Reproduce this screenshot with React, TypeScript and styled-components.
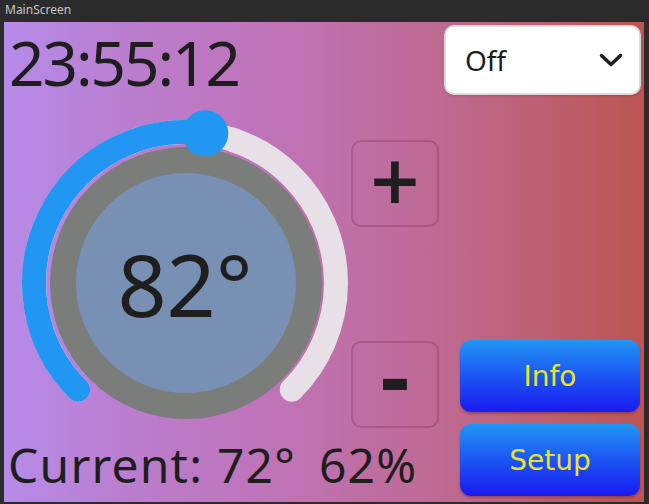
import styled, { createGlobalStyle } from 'styled-components';

const GlobalStyle = createGlobalStyle`
  html, body {
    margin: 0;
    padding: 0;
    background: #2b2b2b;
  }
`;

// gauge geometry, in screen coordinates
const CX = 181;
const CY = 261;
const R = 151;
const START = -135;
const END = 135;

const point = (deg: number) => {
  const a = (deg * Math.PI) / 180;
  return { x: CX + R * Math.sin(a), y: CY - R * Math.cos(a) };
};

const arc = (from: number, to: number) => {
  const a = point(from);
  const b = point(to);
  const large = to - from > 180 ? 1 : 0;
  return `M ${a.x} ${a.y} A ${R} ${R} 0 ${large} 1 ${b.x} ${b.y}`;
};

const Gauge = ({ value, min, max }: { value: number; min: number; max: number }) => {
  const angle = START + ((value - min) / (max - min)) * (END - START);
  const knob = point(angle);
  return (
    <DialSvg width={347} height={326} viewBox="0 84 347 326">
      <path d={arc(START, END)} fill="none" stroke="#e7e1e7" strokeWidth={24} strokeLinecap="round" />
      <path d={arc(START, angle)} fill="none" stroke="#2196f3" strokeWidth={24} strokeLinecap="round" />
      <circle cx={182} cy={261} r={123} fill="#7890b4" stroke="#7a7d7a" strokeWidth={26} />
      <circle cx={knob.x} cy={knob.y} r={23} fill="#2196f3" />
      <SetPoint x={181} y={295} textAnchor="middle">
        {value}°
      </SetPoint>
    </DialSvg>
  );
};

const App = () => {
  return (
    <>
      <GlobalStyle />
      <Window>
        <TitleBar>MainScreen</TitleBar>
        <Screen>
          <LeftCol>
            <Clock>23:55:12</Clock>
            <Gauge value={82} min={45} max={115} />
            <Current>
              <span>Current: 72°</span>
              <span>62%</span>
            </Current>
          </LeftCol>
          <MidCol>
            <StepButton $top={118} $size={66} $lift={6}>+</StepButton>
            <StepButton $top={114} $size={78} $lift={9}>-</StepButton>
          </MidCol>
          <RightCol>
            <Select>
              <span>Off</span>
              <svg width="24" height="14" viewBox="0 0 24 14">
                <path d="M2.5 2.5 L12 11.5 L21.5 2.5" fill="none" stroke="#1e1e1e" strokeWidth={3.5} strokeLinecap="round" strokeLinejoin="round" />
              </svg>
            </Select>
            <Spacer />
            <ActionButton>Info</ActionButton>
            <ActionButton $last>Setup</ActionButton>
          </RightCol>
        </Screen>
      </Window>
    </>
  );
};

export default App;

const Window = styled.div`
  width: 649px;
  height: 504px;
  background: #2b2b2b;
`;

const TitleBar = styled.div`
  height: 22px;
  padding-left: 5px;
  box-sizing: border-box;
  color: #c6c6c6;
  font-family: 'Noto Sans', sans-serif;
  font-size: 12px;
  line-height: 20px;
`;

const Screen = styled.div`
  margin-left: 4px;
  width: 640px;
  height: 480px;
  display: flex;
  background: linear-gradient(
    90deg,
    #b68be9 0%,
    #bb7ccc 22%,
    #c072b4 45%,
    #be6a92 68%,
    #bd5f70 85%,
    #bc5552 100%
  );
  color: #1e1e1e;
  font-family: 'Noto Sans', sans-serif;
`;

const LeftCol = styled.div`
  width: 347px;
  display: flex;
  flex-direction: column;
  white-space: nowrap;
`;

const Clock = styled.div`
  height: 84px;
  box-sizing: border-box;
  padding: 9px 0 0 5px;
  font-size: 62px;
  line-height: 62px;
  letter-spacing: -2px;
`;

const DialSvg = styled.svg`
  display: block;
`;

const SetPoint = styled.text`
  font-family: 'Noto Sans', sans-serif;
  font-size: 86px;
  fill: #1e1e1e;
`;

const Current = styled.div`
  height: 70px;
  box-sizing: border-box;
  padding: 9px 0 0 4px;
  display: flex;
  gap: 23px;
  font-size: 48px;
  line-height: 48px;
  letter-spacing: 1.2px;
`;

const MidCol = styled.div`
  width: 88px;
  display: flex;
  flex-direction: column;
`;

const StepButton = styled.div<{ $top: number; $size: number; $lift: number }>`
  margin-top: ${(p) => p.$top}px;
  height: 87px;
  box-sizing: border-box;
  padding-bottom: ${(p) => p.$lift}px;
  border: 2px solid rgba(110, 40, 80, 0.28);
  border-radius: 10px;
  display: flex;
  align-items: center;
  justify-content: center;
  font-family: 'DejaVu Sans', sans-serif;
  font-weight: bold;
  font-size: ${(p) => p.$size}px;
  line-height: 1;
`;

const RightCol = styled.div`
  flex: 1;
  display: flex;
  flex-direction: column;
`;

const Select = styled.div`
  margin: 3px 3px 0 5px;
  height: 70px;
  box-sizing: border-box;
  padding: 0 16px 0 19px;
  background: #fff;
  border: 2px solid #dcdcdc;
  border-radius: 10px;
  box-shadow: 0 1px 2px rgba(0, 0, 0, 0.15);
  display: flex;
  align-items: center;
  justify-content: space-between;
  font-size: 28px;
`;

const Spacer = styled.div`
  flex: 1;
`;

const ActionButton = styled.div<{ $last?: boolean }>`
  margin: ${(p) => (p.$last ? '12px 4px 6px 21px' : '0 4px 0 21px')};
  height: 72px;
  border-radius: 11px;
  background: linear-gradient(180deg, #2196f3 0%, #1c55f4 50%, #1a1aef 100%);
  box-shadow: 0 2px 2px rgba(60, 20, 40, 0.3);
  display: flex;
  align-items: center;
  justify-content: center;
  color: #e8e22a;
  font-family: 'DejaVu Sans', sans-serif;
  font-size: 28px;
`;
